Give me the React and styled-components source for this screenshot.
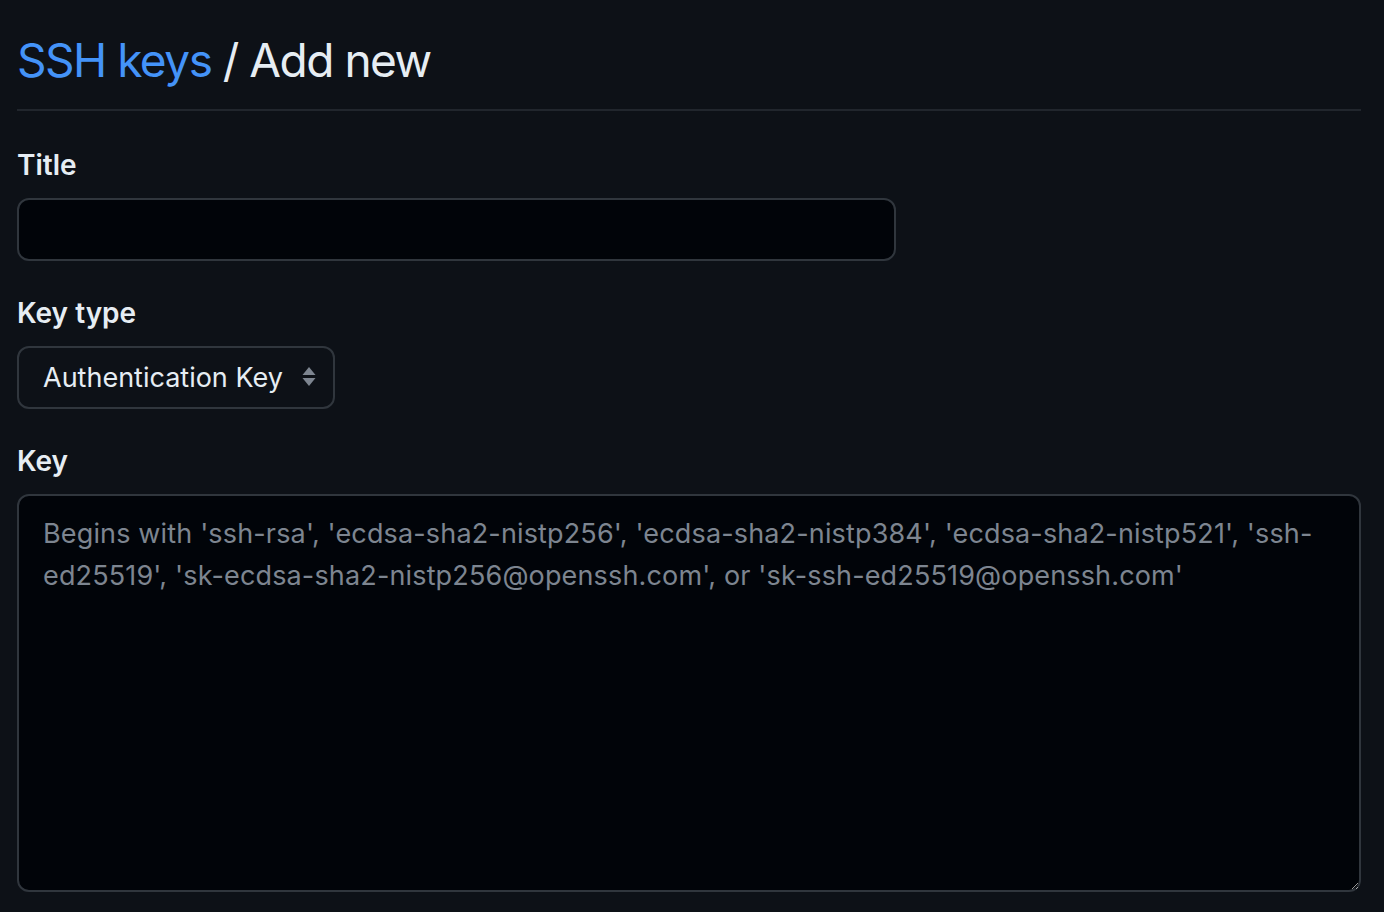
import React from "react";
import styled, { createGlobalStyle } from "styled-components";

const GlobalStyle = createGlobalStyle`
    html, body {
        margin: 0;
        padding: 0;
        background: #0d1117;
        color: #e6edf3;
        font-family: Inter, "Liberation Sans", sans-serif;
    }
`;

function SelectArrows() {
    return (
        <svg width="14" height="20" viewBox="0 0 14 20" aria-hidden="true">
            <path d="M7 0 L13.5 8 L0.5 8 Z" fill="#7d8590" />
            <path d="M0.5 11 L13.5 11 L7 19 Z" fill="#7d8590" />
        </svg>
    );
}

export default function App() {
    return (
        <>
            <GlobalStyle />
            <Page>
                <Subhead>
                    <Heading>
                        <a href="#keys">SSH keys</a> / Add new
                    </Heading>
                </Subhead>

                <FormGroup $first>
                    <Label htmlFor="title">Title</Label>
                    <TextInput id="title" type="text" />
                </FormGroup>

                <FormGroup>
                    <Label htmlFor="type">Key type</Label>
                    <SelectWrap>
                        <Select id="type" defaultValue="auth">
                            <option value="auth">Authentication Key</option>
                            <option value="signing">Signing Key</option>
                        </Select>
                        <Arrows>
                            <SelectArrows />
                        </Arrows>
                    </SelectWrap>
                </FormGroup>

                <FormGroup>
                    <Label htmlFor="key">Key</Label>
                    <KeyArea
                        id="key"
                        placeholder="Begins with 'ssh-rsa', 'ecdsa-sha2-nistp256', 'ecdsa-sha2-nistp384', 'ecdsa-sha2-nistp521', 'ssh-ed25519', 'sk-ecdsa-sha2-nistp256@openssh.com', or 'sk-ssh-ed25519@openssh.com'"
                    />
                </FormGroup>
            </Page>
        </>
    );
}

const Page = styled.div`
    padding: 24px 23px 0 17px;
    box-sizing: border-box;
    width: 1384px;
`;

const Subhead = styled.div`
    padding-bottom: 13px;
    border-bottom: 2px solid #21262d;
`;

const Heading = styled.h2`
    margin: 0;
    font-size: 46px;
    font-weight: 400;
    line-height: 72px;
    color: #e6edf3;
    letter-spacing: -1.5px;

    a {
        color: #4493f8;
        text-decoration: none;
    }
`;

const FormGroup = styled.div`
    display: flex;
    flex-direction: column;
    align-items: flex-start;
    margin-top: ${p => (p.$first ? "33px" : "31px")};
`;

const Label = styled.label`
    font-size: 28px;
    font-weight: 600;
    line-height: 42px;
    color: #e6edf3;
    margin-bottom: 12px;
`;

const fieldBase = `
    box-sizing: border-box;
    border: 2px solid #30363d;
    border-radius: 12px;
    font-family: Inter, "Liberation Sans", sans-serif;
    font-size: 27px;
    color: #e6edf3;
    outline: none;
    color-scheme: dark;
`;

const TextInput = styled.input`
    ${fieldBase}
    width: 879px;
    height: 63px;
    padding: 0 24px;
    background: #010409;
`;

const SelectWrap = styled.div`
    position: relative;
`;

const Select = styled.select`
    ${fieldBase}
    appearance: none;
    width: 318px;
    height: 63px;
    padding: 0 40px 0 24px;
    background: #0d1117;
    line-height: 42px;
`;

const Arrows = styled.span`
    position: absolute;
    right: 19px;
    top: 21px;
    display: flex;
    pointer-events: none;
`;

const KeyArea = styled.textarea`
    ${fieldBase}
    width: 1344px;
    height: 398px;
    padding: 17px 24px;
    background: #010409;
    line-height: 42px;
    letter-spacing: 0.15px;
    resize: vertical;

    &::placeholder {
        color: #7d8590;
        opacity: 1;
    }
`;
